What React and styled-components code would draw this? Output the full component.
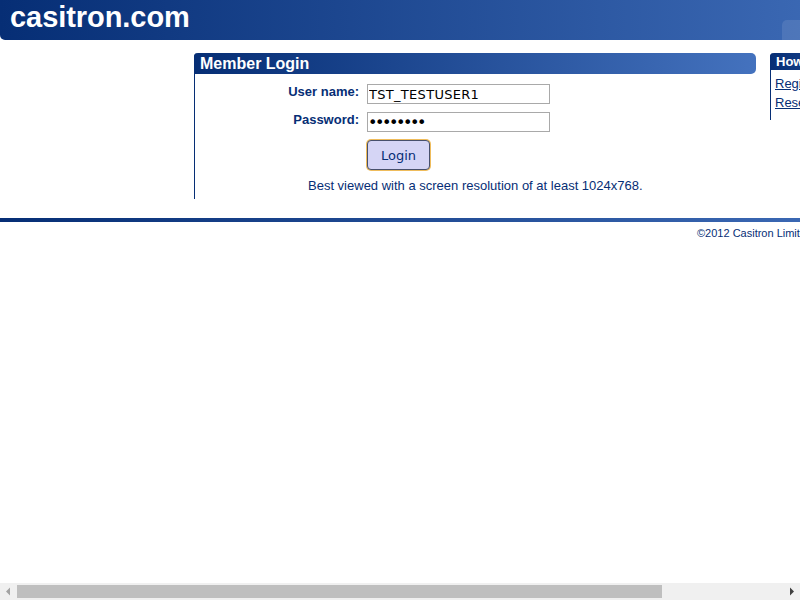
import React from "react";
import styled, { createGlobalStyle } from "styled-components";

const Global = createGlobalStyle`
  body { margin: 0; background: #fff; overflow: hidden; }
  *, *::before { box-sizing: border-box; }
`;

const Window = styled.div`
  width: 800px;
  height: 600px;
  display: flex;
  flex-direction: column;
  overflow: hidden;
  color: #062e75;
  font: 13px/15px "Liberation Sans", Arial, sans-serif;
`;

const Viewport = styled.div`
  flex: 1;
  overflow: hidden;
`;

const Page = styled.div`
  width: 950px;
`;

const Header = styled.header`
  height: 40px;
  display: flex;
  justify-content: space-between;
  align-items: flex-end;
  padding-left: 10px;
  border-radius: 0 0 5px 5px;
  background: linear-gradient(to right, #062e75, #4472be);
`;

const Brand = styled.h1`
  margin: 0 0 6px;
  font-size: 29px;
  line-height: 34px;
  letter-spacing: -0.06px;
  color: #fff;
`;

const HeaderTab = styled.div`
  width: 168px;
  height: 20px;
  border-radius: 5px 0 0 0;
  background: rgba(255, 255, 255, 0.1);
`;

const Columns = styled.main`
  display: grid;
  grid-template-columns: 562px 180px;
  column-gap: 14px;
  padding: 13px 0 0 194px;
  height: 178px;
  align-items: start;
`;

const Panel = styled.section`
  height: ${(p) => p.$height};
  border-left: 1px solid #062e75;
  border-top-left-radius: 4px;
`;

const PanelTitle = styled.h2`
  margin: 0 0 0 -1px;
  height: ${(p) => (p.$small ? "17px" : "21px")};
  padding-left: 6px;
  border-radius: ${(p) => (p.$small ? "4px 4px 0 0" : "4px 5px 5px 0")};
  font-size: ${(p) => (p.$small ? "13px" : "16px")};
  line-height: ${(p) => (p.$small ? "17px" : "21px")};
  color: #fff;
  background: linear-gradient(to right, #062e75, #4472be);
`;

const Form = styled.form`
  display: grid;
  grid-template-columns: 164px 183px;
  grid-template-rows: 20px 20px 32px;
  column-gap: 8px;
  row-gap: 8px;
  padding-top: 10px;
`;

const Label = styled.label`
  text-align: right;
  font-weight: bold;
`;

const Field = styled.input`
  width: 183px;
  height: 20px;
  padding: 1px;
  border: 1px solid #a9a9a9;
  border-radius: 0;
  outline: 0;
  color: #000;
  background: #fff;
  font: 13px "DejaVu Sans", Verdana, sans-serif;
  letter-spacing: 0.3px;
`;

const PasswordField = styled(Field)`
  padding-left: 0;
  font-size: 16px;
  letter-spacing: -2.44px;
`;

const LoginButton = styled.button`
  grid-column: 2;
  justify-self: start;
  width: 63px;
  height: 30px;
  padding: 0;
  border: 1px solid #47506c;
  border-radius: 4px;
  box-shadow: 0 0 0 1px #efbc5b;
  color: #062e75;
  background: #d5d5f5;
  font: 13px "DejaVu Sans", Verdana, sans-serif;
`;

const Note = styled.p`
  margin: 0 0 0 113px;
  padding-top: 6px;
  white-space: nowrap;
`;

const Links = styled.nav`
  display: flex;
  flex-direction: column;
  gap: 4px;
  padding: 6px 0 0 4px;
`;

const Link = styled.a`
  color: #062e75;
  text-decoration: underline;
`;

const Rule = styled.hr`
  height: 4px;
  margin: 0;
  border: 0;
  background: linear-gradient(to right, #062e75, #4472be);
`;

const Copyright = styled.footer`
  padding: 5px 0 0 697px;
  font-size: 11px;
  line-height: 13px;
  white-space: nowrap;
`;

const Scrollbar = styled.div`
  height: 17px;
  display: flex;
  align-items: center;
  background: #f0f0f0;
`;

const Arrow = styled.svg`
  width: 17px;
  height: 17px;
  fill: ${(p) => p.$fill};
`;

const Track = styled.div`
  flex: 1;
  height: 13px;
`;

const Thumb = styled.div`
  width: 645px;
  height: 13px;
  background: #bfbfbf;
`;

export default function App() {
  return (
    <Window>
      <Global />
      <Viewport>
        <Page>
          <Header>
            <Brand>casitron.com</Brand>
            <HeaderTab />
          </Header>
          <Columns>
            <Panel $height="146px">
              <PanelTitle>Member Login</PanelTitle>
              <Form onSubmit={(e) => e.preventDefault()}>
                <Label htmlFor="user">User name:</Label>
                <Field id="user" defaultValue="TST_TESTUSER1" />
                <Label htmlFor="password">Password:</Label>
                <PasswordField id="password" type="password" defaultValue="password" />
                <LoginButton>Login</LoginButton>
              </Form>
              <Note>Best viewed with a screen resolution of at least 1024x768.</Note>
            </Panel>
            <Panel $height="67px">
              <PanelTitle $small>How do I...</PanelTitle>
              <Links>
                <Link href="#">Register</Link>
                <Link href="#">Reset password</Link>
              </Links>
            </Panel>
          </Columns>
          <Rule />
          <Copyright>©2012 Casitron Limited</Copyright>
        </Page>
      </Viewport>
      <Scrollbar>
        <Arrow $fill="#a3a3a3" viewBox="0 0 17 17"><path d="M10 4.5v8L6 8.5z" /></Arrow>
        <Track><Thumb /></Track>
        <Arrow $fill="#404040" viewBox="0 0 17 17"><path d="M7 4.5v8l4-4z" /></Arrow>
      </Scrollbar>
    </Window>
  );
}
